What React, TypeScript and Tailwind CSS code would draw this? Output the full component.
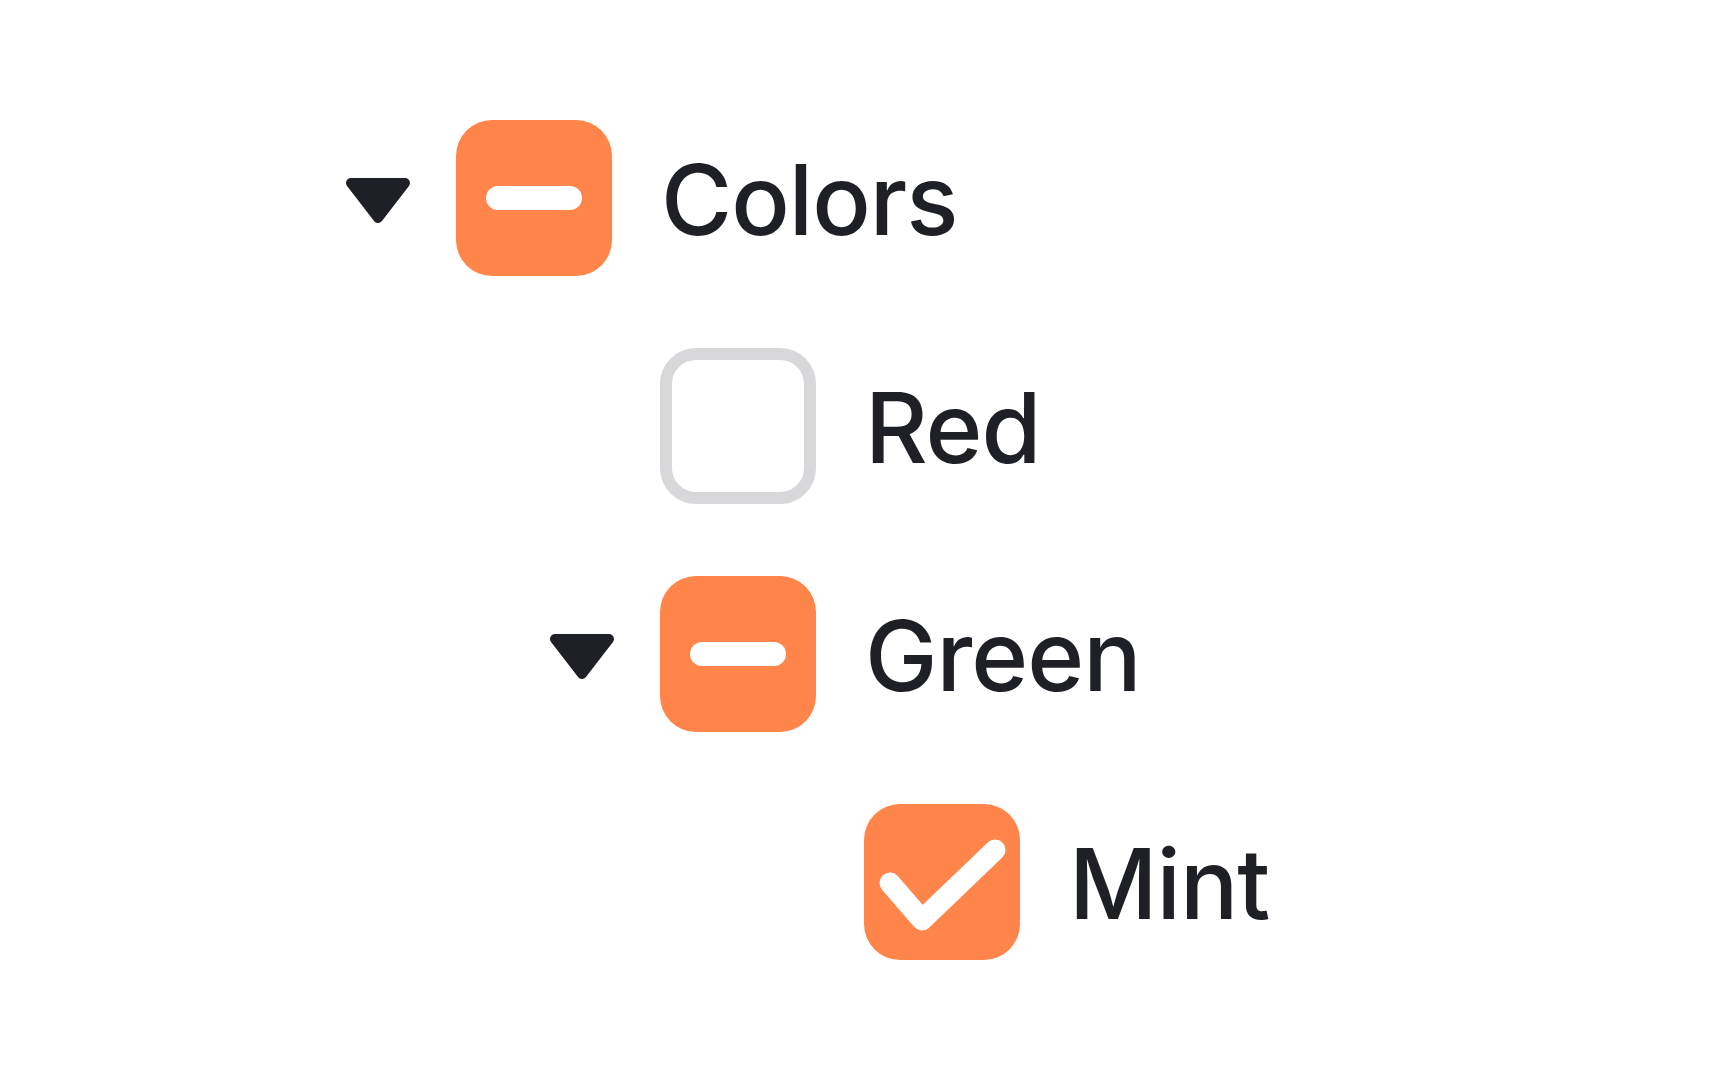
import React from "react";

type State = "checked" | "indeterminate" | "unchecked";

type Node = {
  label: string;
  level: number;
  state: State;
  expandable?: boolean;
};

const rows: Node[] = [
  { label: "Colors", level: 0, state: "indeterminate", expandable: true },
  { label: "Red", level: 1, state: "unchecked" },
  { label: "Green", level: 1, state: "indeterminate", expandable: true },
  { label: "Mint", level: 2, state: "checked" },
];

function Caret() {
  return (
    <svg width="64" height="46" viewBox="0 0 64 46" className="mt-[5px]">
      <polygon
        points="5,5 59,5 32,40"
        fill="#1f2026"
        stroke="#1f2026"
        strokeWidth="10"
        strokeLinejoin="round"
      />
    </svg>
  );
}

function Box({ state }: { state: State }) {
  if (state === "unchecked") {
    return (
      <div className="w-[156px] h-[156px] shrink-0 rounded-[36px] border-[12px] border-[#d8d8da] bg-white" />
    );
  }
  return (
    <div className="w-[156px] h-[156px] shrink-0 rounded-[36px] bg-[#ff854b] flex items-center justify-center">
      {state === "indeterminate" ? (
        <div className="w-[96px] h-[24px] rounded-full bg-white" />
      ) : (
        <svg width="156" height="156" viewBox="0 0 156 156">
          <polyline
            points="26,79 58,116 131,46"
            fill="none"
            stroke="white"
            strokeWidth="21"
            strokeLinecap="round"
            strokeLinejoin="round"
          />
        </svg>
      )}
    </div>
  );
}

export default function App() {
  return (
    <div
      className="w-[1728px] h-[1080px] bg-white pt-[120px] pl-[346px]"
      style={{ fontFamily: "Inter, 'Noto Sans', sans-serif" }}
    >
      <div className="flex flex-col gap-[72px]">
        {rows.map((row) => (
          <div
            key={row.label}
            className={
              "flex items-center " +
              (row.level === 0 ? "pl-0" : row.level === 1 ? "pl-[204px]" : "pl-[408px]")
            }
          >
            <div className="w-[110px] shrink-0 flex items-center">
              {row.expandable && <Caret />}
            </div>
            <Box state={row.state} />
            <span className="ml-[49px] mt-[2px] text-[97px] leading-none font-medium text-[#1f2026] tracking-[-1px]">
              {row.label}
            </span>
          </div>
        ))}
      </div>
    </div>
  );
}
